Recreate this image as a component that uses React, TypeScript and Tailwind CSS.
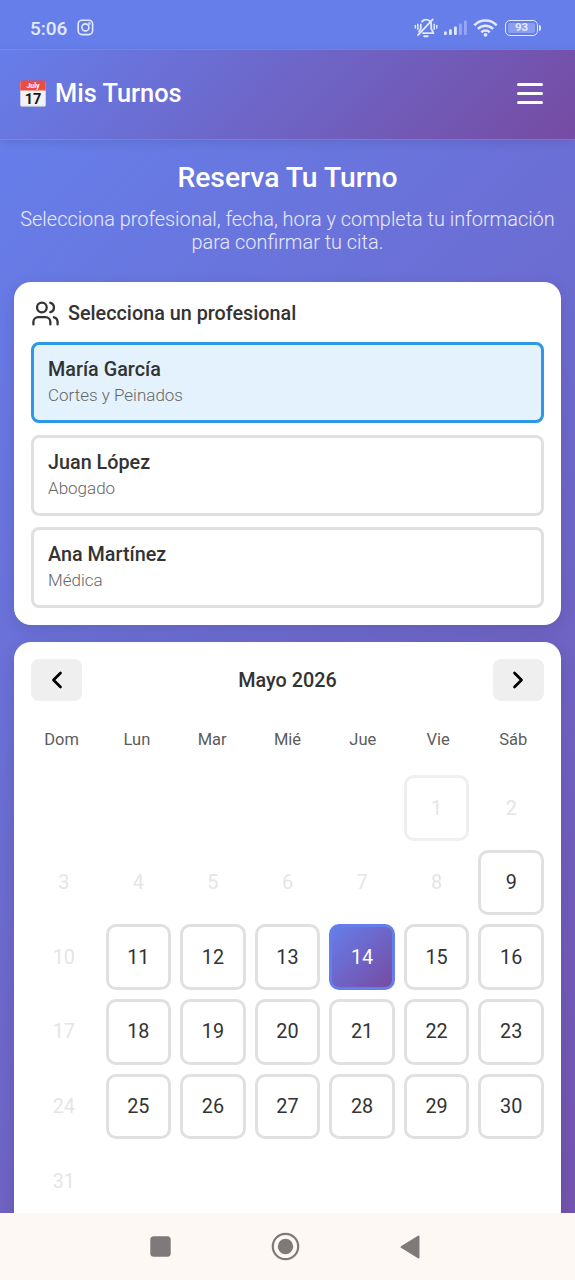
import { useState } from "react";
import { Users, ChevronLeft, ChevronRight } from "lucide-react";

interface Professional {
  id: number;
  name: string;
  specialty: string;
}

const professionals: Professional[] = [
  { id: 1, name: "María García", specialty: "Cortes y Peinados" },
  { id: 2, name: "Juan López", specialty: "Abogado" },
  { id: 3, name: "Ana Martínez", specialty: "Médica" },
];

const weekDays = ["Dom", "Lun", "Mar", "Mié", "Jue", "Vie", "Sáb"];

// mayo 2026 empieza en viernes
const firstWeekday = 5;
const daysInMonth = 31;
const today = 9;

function StatusBar() {
  return (
    <div className="flex h-[49px] shrink-0 items-center bg-[#667eea] pl-[30px] pr-[34px] pt-[6px] text-[#e3e9ff]">
      <span className="pt-px text-[19px] leading-none font-medium">5:06</span>
      <svg className="ml-[10px]" width="17" height="17" viewBox="0 0 17 17" fill="none" stroke="currentColor" strokeWidth="1.6">
        <rect x="1.2" y="1.2" width="14.4" height="14.4" rx="3.8" />
        <circle cx="8.4" cy="8.4" r="3.5" />
        <circle cx="12.4" cy="4.5" r="0.5" />
      </svg>
      <div className="ml-auto flex items-center">
        <svg width="24" height="20" viewBox="0 0 24 20" fill="none" stroke="currentColor" strokeWidth="1.8" strokeLinecap="round" strokeLinejoin="round">
          <path d="M8 3.6C9 2.3 10.4 1.6 12 1.6c3 0 5.2 2.4 5.2 5.4v3.6l2.3 4.6H9" />
          <path d="M6.8 6.5v4.1l-1.8 3.2" />
          <path d="M18.8 1.4 4 17.2" />
          <path d="M10.2 18.2h3.4" strokeWidth="2" />
          <path d="M3.8 6.2v5M1.3 7.5v2.4M20.2 6.2v5M22.7 7.5v2.4" strokeWidth="1.5" />
        </svg>
        <svg className="ml-[6px]" width="23" height="16" viewBox="0 0 23 16" fill="currentColor">
          <rect x="0" y="11.5" width="2.8" height="3.5" rx="1" />
          <rect x="5" y="9.2" width="2.8" height="5.8" rx="1" />
          <rect x="10" y="6.5" width="2.8" height="8.5" rx="1" />
          <rect x="15" y="3.5" width="2.8" height="11.5" rx="1" opacity="0.4" />
          <rect x="20" y="0.5" width="2.8" height="14.5" rx="1" opacity="0.4" />
        </svg>
        <svg className="ml-[6px]" width="25" height="18" viewBox="0 0 25 18" fill="none" stroke="currentColor" strokeWidth="2.5">
          <path d="M1.3 6.3a15.6 15.6 0 0 1 22.4 0" />
          <path d="M4.9 9.9a10.7 10.7 0 0 1 15.2 0" />
          <path d="M8.3 13.3a6 6 0 0 1 8.4 0" />
          <circle cx="12.5" cy="15.8" r="1.9" fill="currentColor" stroke="none" />
        </svg>
        <div className="ml-[7px] flex h-4 w-[33px] items-center justify-center rounded-[5px] border-[1.5px] border-current p-[2px]">
          <span className="flex h-full w-full items-center justify-center rounded-[2px] bg-white/25 text-[11.5px] leading-none font-bold">93</span>
        </div>
        <span className="ml-px h-[6px] w-[2px] rounded-r-full bg-current" />
      </div>
    </div>
  );
}

function CalendarEmoji() {
  return (
    <svg width="26" height="27" viewBox="0 0 26 27">
      <rect x="0.3" y="1" width="25.4" height="25.6" rx="1.6" fill="#f3f3f5" />
      <path d="M0.3 10.5V2a1.5 1.5 0 0 1 1.5-1.5h22.4A1.5 1.5 0 0 1 25.7 2v8.5z" fill="#ef4b3f" />
      <path d="M0.8 26.3h24.4" stroke="#b8bfd8" strokeWidth="0.9" />
      <text x="13" y="8" textAnchor="middle" fontSize="7" fontWeight="700" fill="#fff">July</text>
      <text x="13" y="23.8" textAnchor="middle" fontSize="14.5" fontWeight="700" fill="#17171b">17</text>
    </svg>
  );
}

function Header() {
  return (
    <header className="relative flex h-[91px] shrink-0 items-center justify-between border-y border-[#7d8ff0]/60 bg-linear-[135deg,#667eea_0%,#764ba2_100%] bg-origin-border pb-[2px] pl-5 pr-8 shadow-[0_2px_10px_rgba(0,0,0,0.1)]">
      <div className="flex items-center gap-[9px]">
        <CalendarEmoji />
        <span className="pt-px text-[25.4px] leading-none font-medium text-white">Mis Turnos</span>
      </div>
      <button className="flex w-[26px] flex-col gap-[6px]" aria-label="Menú">
        <span className="h-[3px] rounded-full bg-white" />
        <span className="h-[3px] rounded-full bg-white" />
        <span className="h-[3px] rounded-full bg-white" />
      </button>
    </header>
  );
}

function ProfessionalSelector() {
  const [selected, setSelected] = useState(1);

  return (
    <section className="h-[343px] shrink-0 rounded-[17px] bg-white px-[17px] pt-[17px] shadow-[0_4px_15px_rgba(0,0,0,0.1)]">
      <h2 className="flex h-7 items-center gap-2 text-[19.8px] font-medium text-[#333]">
        <Users size={29} strokeWidth={1.9} />
        <span className="pt-[2px]">Selecciona un profesional</span>
      </h2>
      <div className="mt-[15px] flex flex-col gap-[11.5px]">
        {professionals.map((p) => (
          <button
            key={p.id}
            onClick={() => setSelected(p.id)}
            className={`flex h-[81px] flex-col items-start rounded-[8px] border-3 px-[14px] pt-3 text-left ${
              selected === p.id ? "border-[#2d98e6] bg-[#e3f2fd]" : "border-[#e0e0e0] bg-white"
            }`}
          >
            <span className="text-[19.8px] leading-[25px] font-medium text-[#333]">{p.name}</span>
            <span className="mt-[2px] text-[17px] leading-[22px] font-light text-[#666]">{p.specialty}</span>
          </button>
        ))}
      </div>
    </section>
  );
}

function Calendar() {
  const [selectedDay, setSelectedDay] = useState(14);
  const days = Array.from({ length: daysInMonth }, (_, i) => i + 1);

  const dayClass = (day: number) => {
    const weekday = (firstWeekday + day - 1) % 7;
    if (day === selectedDay) {
      return "border-[#667eea] bg-linear-[135deg,#667eea_0%,#764ba2_100%] text-white";
    }
    if (day === 1) return "border-[#e0e0e0] text-[#ccc] opacity-50";
    if (day < today || weekday === 0) return "border-transparent text-[#ccc] opacity-50";
    return "border-[#e0e0e0] bg-white text-[#333]";
  };

  return (
    <section className="mt-[17px] h-[640px] shrink-0 rounded-[17px] bg-white px-[17px] pt-[17px] shadow-[0_4px_15px_rgba(0,0,0,0.1)]">
      <div className="flex items-center justify-between">
        <button className="flex h-[42px] w-[51px] items-center justify-center rounded-[8px] bg-[#efefef] text-black" aria-label="Mes anterior">
          <ChevronLeft size={28} strokeWidth={2.3} />
        </button>
        <h3 className="pt-[2px] text-[19.8px] font-medium text-[#333]">Mayo 2026</h3>
        <button className="flex h-[42px] w-[51px] items-center justify-center rounded-[8px] bg-[#efefef] text-black" aria-label="Mes siguiente">
          <ChevronRight size={28} strokeWidth={2.3} />
        </button>
      </div>
      <div className="mt-[27px] grid grid-cols-7 gap-x-[14px] text-center text-[16.5px] leading-6 text-[#5c5c5c]">
        {weekDays.map((d) => (
          <span key={d}>{d}</span>
        ))}
      </div>
      <div className="mt-[23.3px] grid grid-cols-7 gap-[9px]">
        {days.map((day) => (
          <button
            key={day}
            onClick={() => setSelectedDay(day)}
            className={`flex aspect-square items-center justify-center rounded-[10px] border-3 pt-px text-[19.8px] ${day === 1 ? "col-start-6" : ""} ${dayClass(day)}`}
          >
            {day}
          </button>
        ))}
      </div>
    </section>
  );
}

function NavigationBar() {
  return (
    <nav className="flex h-[67px] shrink-0 items-center bg-[#fef8f4] pl-[150px] text-[#7e7a79]">
      <svg width="21" height="21" viewBox="0 0 21 21">
        <rect x="0.3" y="0.3" width="20.4" height="20.4" rx="3.5" fill="currentColor" />
      </svg>
      <svg className="ml-[100px]" width="29" height="29" viewBox="0 0 29 29">
        <circle cx="14.5" cy="14.5" r="12.7" fill="none" stroke="currentColor" strokeWidth="2.2" />
        <circle cx="14.5" cy="14.5" r="7.7" fill="currentColor" />
      </svg>
      <svg className="ml-[100px]" width="20" height="24" viewBox="0 0 20 24">
        <path d="M1.5 12 18.5 1.5v21z" fill="currentColor" stroke="currentColor" strokeWidth="2" strokeLinejoin="round" />
      </svg>
    </nav>
  );
}

export default function App() {
  return (
    <div className="flex h-[1280px] w-full flex-col overflow-hidden font-[Roboto,'Noto_Sans',sans-serif]">
      <StatusBar />
      <Header />
      <main className="flex min-h-0 flex-1 flex-col overflow-hidden bg-linear-[135deg,#667eea_0%,#764ba2_100%] bg-size-[100%_1420px] bg-no-repeat px-[14px] pt-[21px]">
        <div className="mb-[28px] shrink-0 text-center">
          <h1 className="text-[28.3px] leading-[34px] font-medium text-white">Reserva Tu Turno</h1>
          <p className="mt-[13px] text-[19.9px] leading-[23px] font-light text-white/85">
            Selecciona profesional, fecha, hora y completa tu información para confirmar tu cita.
          </p>
        </div>
        <ProfessionalSelector />
        <Calendar />
      </main>
      <NavigationBar />
    </div>
  );
}
